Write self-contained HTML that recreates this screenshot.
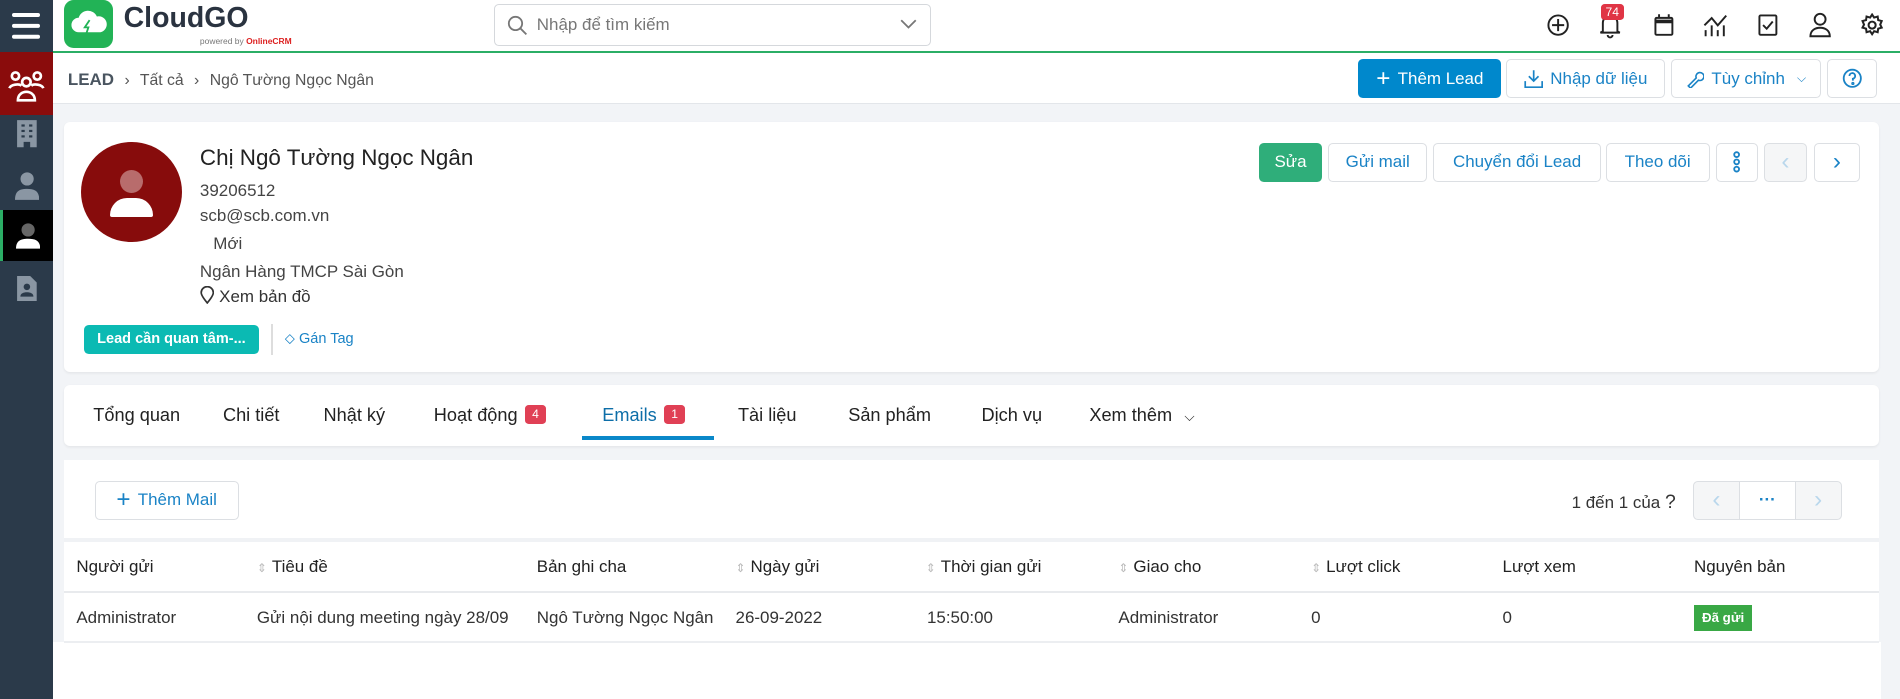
<!DOCTYPE html>
<html><head><meta charset="utf-8">
<style>
*{box-sizing:border-box;margin:0;padding:0}
html,body{width:1900px;height:699px;overflow:hidden;background:#fff}
#w{zoom:1.21173;width:1568px;height:577px;position:relative;font-family:"Liberation Sans","Noto Sans CJK SC",sans-serif;color:#333;font-size:14px}
.a{position:absolute}
.btn{position:absolute;border:1px solid #dcdfe3;border-radius:4px;background:#fff;color:#1a83c6;font-size:14px;display:flex;align-items:center;justify-content:center;gap:6px}
.th{position:absolute;top:460px;font-size:14px;color:#222}
.td{position:absolute;top:502px;font-size:14px;color:#333}
.sort{color:#bbb;font-size:10px;margin-right:4px}
.tab{position:absolute;top:334px;font-size:15px;color:#222}
.badge{display:inline-block;background:#e04055;color:#fff;font-size:10px;border-radius:3px;padding:2px 6px;margin-left:6px;vertical-align:2px}
</style></head><body><div id="w">
<div class="a" style="left:44px;top:85px;width:1524px;height:445px;background:#f2f4f7"></div>
<div class="a" style="left:1552px;top:85px;width:16px;height:492px;background:#f2f4f7"></div>
<!-- sidebar -->
<div class="a" style="left:0;top:0;width:44px;height:577px;background:#2b3a4a"></div>
<div class="a" style="left:10px;top:11px;width:23px;height:3px;background:#fff;border-radius:2px;box-shadow:0 9px 0 #fff,0 18px 0 #fff"></div>
<div class="a" style="left:0;top:43px;width:44px;height:52px;background:#8a0c0c"></div>
<svg class="a" style="left:6px;top:58px" width="32" height="28" viewBox="0 0 32 28" fill="none" stroke="#fff" stroke-width="2.2"><circle cx="7" cy="5" r="3"/><circle cx="25" cy="5" r="3"/><circle cx="16" cy="10" r="3.5"/><path d="M2 15c1-3 8-4 10-2M30 15c-1-3-8-4-10-2M9 25c0-5 4-7 7-7s7 2 7 7z"/></svg>
<svg class="a" style="left:13px;top:97px" width="18" height="25" viewBox="0 0 20 26"><path d="M1 1h18v25h-6v-5h-6v5H1z" fill="#8a96a3"/><g fill="#2b3a4a"><rect x="5" y="5" width="3" height="2"/><rect x="12" y="5" width="3" height="2"/><rect x="5" y="10" width="3" height="2"/><rect x="12" y="10" width="3" height="2"/><rect x="5" y="15" width="3" height="2"/><rect x="12" y="15" width="3" height="2"/></g></svg>
<svg class="a" style="left:12px;top:141px" width="20" height="24" viewBox="0 0 22 26" fill="#8a96a3"><circle cx="11" cy="7" r="6"/><path d="M0 26c0-8 4-10 11-10s11 2 11 10z"/></svg>
<div class="a" style="left:0;top:173px;width:44px;height:42px;background:#000;border-left:3px solid #2bae66"></div>
<svg class="a" style="left:13px;top:183px" width="20" height="24" viewBox="0 0 22 26"><circle cx="11" cy="7" r="6" fill="#666"/><path d="M0 24c0-7 4-9 11-9s11 2 11 9z" fill="#fff"/></svg>
<svg class="a" style="left:13px;top:226px" width="18" height="23" viewBox="0 0 20 24"><path d="M1 1h12l6 6v17H1z" fill="#8a96a3"/><circle cx="10" cy="11" r="3" fill="#2b3a4a"/><path d="M4 20c0-3 3-4 6-4s6 1 6 4z" fill="#2b3a4a"/></svg>
<!-- header -->
<div class="a" style="left:44px;top:42px;width:1524px;height:2px;background:#2bae66"></div>
<div class="a" style="left:53px;top:0;width:40px;height:40px;background:#22b356;border-radius:8px"></div>
<svg class="a" style="left:57px;top:7px" width="33" height="26" viewBox="0 0 33 26"><path d="M8 20a6 6 0 0 1 0-12a8 8 0 0 1 15-1a6 6 0 0 1 3 13z" fill="#fff"/><path d="M17 10l-4 6h3l-2 6" stroke="#22b356" stroke-width="1.5" fill="none"/></svg>
<div class="a" style="left:102px;top:2px;font-size:23.5px;font-weight:bold;color:#2a3340">CloudGO</div>
<div class="a" style="left:165px;top:30px;font-size:7px;color:#777">powered by <b style="color:#d22">OnlineCRM</b></div>
<div class="a" style="left:408px;top:3px;width:360px;height:35px;border:1px solid #d5d8dc;border-radius:4px"></div>
<svg class="a" style="left:418px;top:12px" width="17" height="17" viewBox="0 0 17 17" fill="none" stroke="#777" stroke-width="1.5"><circle cx="7" cy="7" r="5.5"/><path d="M11 11l5 5"/></svg>
<div class="a" style="left:443px;top:12px;font-size:14px;color:#777">Nhập để tìm kiếm</div>
<svg class="a" style="left:743px;top:16px" width="14" height="8" viewBox="0 0 14 8" fill="none" stroke="#777" stroke-width="1.5"><path d="M1 1l6 6 6-6"/></svg>
<svg class="a" style="left:1276px;top:11px" width="20" height="20" viewBox="0 0 20 20" fill="none" stroke="#222" stroke-width="1.6"><circle cx="10" cy="10" r="8"/><path d="M10 5v10M5 10h10"/></svg>
<svg class="a" style="left:1319px;top:10px" width="20" height="22" viewBox="0 0 20 22" fill="none" stroke="#222" stroke-width="1.6"><path d="M4 16V9a6 6 0 0 1 12 0v7l2 1H2z"/><path d="M8 19a2 2 0 0 0 4 0"/></svg>
<div class="a" style="left:1321px;top:3px;background:#e03545;color:#fff;font-size:10px;border-radius:3px;padding:1px 4px">74</div>
<svg class="a" style="left:1364px;top:11px" width="18" height="20" viewBox="0 0 18 20" fill="none" stroke="#222" stroke-width="1.6"><rect x="2" y="4" width="14" height="14" rx="1"/><path d="M2 7h14" stroke-width="3"/><path d="M5 1v3M13 1v3"/></svg>
<svg class="a" style="left:1405px;top:10px" width="22" height="22" viewBox="0 0 22 22" fill="none" stroke="#222" stroke-width="1.6"><path d="M2 11l6-6 5 6 7-8M3 20v-5M8 20v-9M13 20v-5M18 20v-9"/></svg>
<svg class="a" style="left:1450px;top:11px" width="18" height="20" viewBox="0 0 18 20" fill="none" stroke="#222" stroke-width="1.6"><rect x="2" y="2" width="14" height="16" rx="1"/><path d="M5 10l3 3 5-6"/></svg>
<svg class="a" style="left:1492px;top:10px" width="20" height="22" viewBox="0 0 20 22" fill="none" stroke="#222" stroke-width="1.6"><circle cx="10" cy="6" r="4.5"/><path d="M2 20c0-5 4-7 8-7s8 2 8 7z"/></svg>
<svg class="a" style="left:1535px;top:11px" width="20" height="20" viewBox="0 0 24 24" fill="none" stroke="#222" stroke-width="2"><circle cx="12" cy="12" r="3.5"/><path d="M12 1.5l2 3 3.5-1 .5 3.5 3.5 1-1.5 3.5 1.5 3-3.5 1-.5 3.5-3.5-1-2 3-2-3-3.5 1-.5-3.5-3.5-1 1.5-3-1.5-3.5 3.5-1 .5-3.5 3.5 1z"/></svg>
<!-- breadcrumb -->
<div class="a" style="left:44px;top:85px;width:1524px;height:1px;background:#e3e6ea"></div>
<div class="a" style="left:56px;top:58px;font-size:13px;color:#555"><b style="font-weight:bold;color:#4a5560;font-size:14px">LEAD</b> <span style="margin:0 5px">›</span> Tất cả <span style="margin:0 5px">›</span> Ngô Tường Ngọc Ngân</div>
<div class="btn" style="left:1121px;top:49px;width:118px;height:32px;background:#0088cc;border-color:#0088cc;color:#fff;font-size:14px"><span style="font-size:20px;font-weight:300">+</span> Thêm Lead</div>
<div class="btn" style="left:1243px;top:49px;width:131px;height:32px;font-size:14px"><svg width="16" height="16" viewBox="0 0 16 16" fill="none" stroke="#1a83c6" stroke-width="1.4"><path d="M8 1v9M4 6l4 4 4-4M1 10v5h14v-5"/></svg>Nhập dữ liệu</div>
<div class="btn" style="left:1379px;top:49px;width:124px;height:32px;font-size:14px"><svg width="15" height="15" viewBox="0 0 16 16" fill="none" stroke="#1a83c6" stroke-width="1.4"><path d="M2 14l7-7a3.5 3.5 0 1 1 2 2l-7 7z"/></svg>Tùy chỉnh <span style="font-size:10px;margin-left:4px">⌵</span></div>
<div class="btn" style="left:1508px;top:49px;width:41px;height:32px"><svg width="17" height="17" viewBox="0 0 18 18" fill="none" stroke="#1a83c6" stroke-width="1.6"><circle cx="9" cy="9" r="7.5"/><path d="M6.5 7a2.5 2.5 0 1 1 3 2.4V11"/><circle cx="9.5" cy="13.5" r=".6"/></svg></div>
<!-- card1 -->
<div class="a" style="left:53px;top:101px;width:1498px;height:206px;background:#fff;border-radius:5px;box-shadow:0 1px 2px rgba(0,0,0,.06)"></div>
<div class="a" style="left:67px;top:117px;width:83px;height:83px;border-radius:50%;background:#870c0c"></div>
<div class="a" style="left:99px;top:140px;width:19px;height:19px;border-radius:50%;background:#b86c6c"></div>
<div class="a" style="left:91px;top:163px;width:35px;height:16px;border-radius:17px 17px 2px 2px;background:#fff"></div>
<div class="a" style="left:165px;top:120px;font-size:18.5px;color:#222">Chị Ngô Tường Ngọc Ngân</div>
<div class="a" style="left:165px;top:149px;font-size:14px;color:#444">39206512</div>
<div class="a" style="left:165px;top:170px;font-size:14px;color:#444">scb@scb.com.vn</div>
<div class="a" style="left:176px;top:193px;font-size:14px;color:#444">Mới</div>
<div class="a" style="left:165px;top:216px;font-size:14px;color:#444">Ngân Hàng TMCP Sài Gòn</div>
<div class="a" style="left:165px;top:236px;font-size:14px;color:#333"><svg width="12" height="15" viewBox="0 0 12 15" fill="none" stroke="#333" stroke-width="1.4" style="vertical-align:-2px"><path d="M6 14S1 8 1 5.5a5 5 0 0 1 10 0C11 8 6 14 6 14z"/></svg> Xem bản đồ</div>
<div class="a" style="left:69px;top:268px;width:145px;height:24px;border-radius:4px;background:#0bbab3;color:#fff;font-size:12px;font-weight:bold;text-align:center;line-height:24px">Lead cần quan tâm-...</div>
<div class="a" style="left:224px;top:267px;width:1px;height:26px;background:#ddd"></div>
<div class="a" style="left:235px;top:273px;font-size:12px;color:#1a83c6">⬦ Gán Tag</div>
<div class="btn" style="left:1039px;top:118px;width:52px;height:32px;background:#2fae7a;border-color:#2fae7a;color:#fff">Sửa</div>
<div class="btn" style="left:1096px;top:118px;width:82px;height:32px">Gửi mail</div>
<div class="btn" style="left:1183px;top:118px;width:138px;height:32px">Chuyển đổi Lead</div>
<div class="btn" style="left:1325px;top:118px;width:86px;height:32px">Theo dõi</div>
<div class="btn" style="left:1416px;top:118px;width:35px;height:32px"><svg width="6" height="18" viewBox="0 0 6 18" fill="none" stroke="#1a83c6" stroke-width="1.5"><circle cx="3" cy="3" r="2"/><circle cx="3" cy="9" r="2"/><circle cx="3" cy="15" r="2"/></svg></div>
<div class="btn" style="left:1456px;top:118px;width:35px;height:32px;background:#f5f6f7;color:#b9d7ec;font-size:20px">‹</div>
<div class="btn" style="left:1497px;top:118px;width:38px;height:32px;font-size:20px">›</div>
<!-- tabs -->
<div class="a" style="left:53px;top:318px;width:1498px;height:50px;background:#fff;border-radius:5px;box-shadow:0 1px 2px rgba(0,0,0,.06)"></div>
<div class="tab" style="left:77px">Tổng quan</div>
<div class="tab" style="left:184px">Chi tiết</div>
<div class="tab" style="left:267px">Nhật ký</div>
<div class="tab" style="left:358px">Hoạt động<span class="badge">4</span></div>
<div class="tab" style="left:497px;color:#0d6ea8">Emails<span class="badge">1</span></div>
<div class="a" style="left:480px;top:360px;width:109px;height:3px;background:#0a88c9"></div>
<div class="tab" style="left:609px">Tài liệu</div>
<div class="tab" style="left:700px">Sản phẩm</div>
<div class="tab" style="left:810px">Dịch vụ</div>
<div class="tab" style="left:899px">Xem thêm <span style="font-size:11px;margin-left:6px">⌵</span></div>
<!-- emails card -->
<div class="a" style="left:53px;top:380px;width:1498px;height:150px;background:#fff"></div>
<div class="btn" style="left:78px;top:397px;width:119px;height:32px"><span style="font-size:20px;font-weight:300">+</span> Thêm Mail</div>
<div class="a" style="left:1297px;top:405px;font-size:14px;color:#333">1 đến 1 của <span style="font-size:16px">?</span></div>
<div class="btn" style="left:1397px;top:397px;width:39px;height:32px;background:#f5f6f7;border-radius:4px 0 0 4px;color:#b9d7ec;font-size:20px">‹</div>
<div class="btn" style="left:1435px;top:397px;width:47px;height:32px;border-radius:0;font-weight:bold">···</div>
<div class="btn" style="left:1481px;top:397px;width:39px;height:32px;background:#f5f6f7;border-radius:0 4px 4px 0;color:#b9d7ec;font-size:20px">›</div>
<div class="a" style="left:53px;top:444px;width:1498px;height:3px;background:#f0f2f5"></div>
<div class="a" style="left:53px;top:488px;width:1498px;height:1px;background:#e8eaed"></div>
<div class="th" style="left:63px">Người gửi</div>
<div class="th" style="left:212px"><span class="sort">⇕</span>Tiêu đề</div>
<div class="th" style="left:443px">Bản ghi cha</div>
<div class="th" style="left:607px"><span class="sort">⇕</span>Ngày gửi</div>
<div class="th" style="left:764px"><span class="sort">⇕</span>Thời gian gửi</div>
<div class="th" style="left:923px"><span class="sort">⇕</span>Giao cho</div>
<div class="th" style="left:1082px"><span class="sort">⇕</span>Lượt click</div>
<div class="th" style="left:1240px">Lượt xem</div>
<div class="th" style="left:1398px">Nguyên bản</div>
<div class="td" style="left:63px">Administrator</div>
<div class="td" style="left:212px">Gửi nội dung meeting ngày 28/09</div>
<div class="td" style="left:443px">Ngô Tường Ngọc Ngân</div>
<div class="td" style="left:607px">26-09-2022</div>
<div class="td" style="left:765px">15:50:00</div>
<div class="td" style="left:923px">Administrator</div>
<div class="td" style="left:1082px">0</div>
<div class="td" style="left:1240px">0</div>
<div class="a" style="left:1398px;top:499px;width:48px;height:22px;background:#39a845;color:#fff;font-size:11px;font-weight:bold;text-align:center;line-height:22px">Đã gửi</div>
<div class="a" style="left:53px;top:529px;width:1498px;height:2px;background:#eceef1"></div>
</div></body></html>
